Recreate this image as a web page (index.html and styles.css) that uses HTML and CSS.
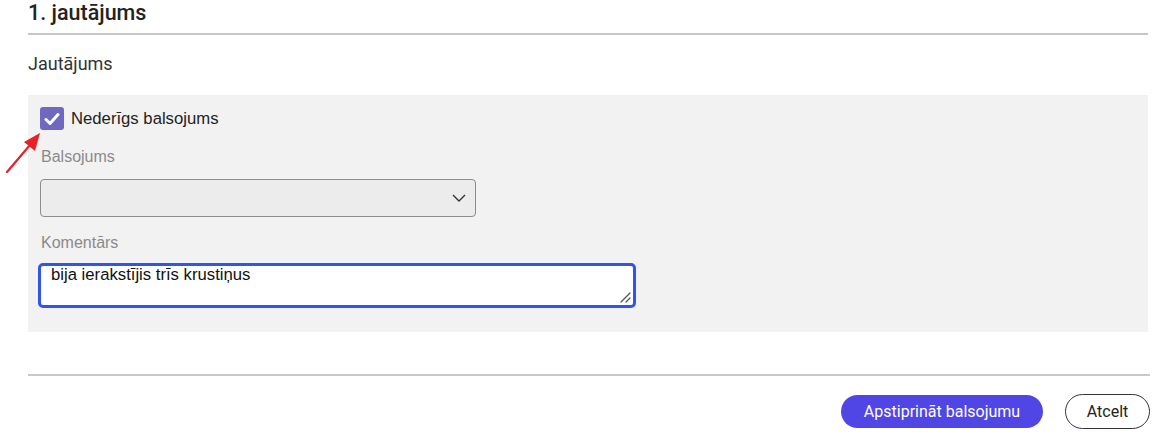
FILE: index.html
```html
<!DOCTYPE html>
<html lang="lv">
<head>
<meta charset="utf-8">
<link rel="stylesheet" href="styles.css">
</head>
<body>
<div class="page">
  <h1 class="title">1. jautājums</h1>
  <div class="question">Jautājums</div>
  <div class="panel">
    <label class="check-row">
      <span class="checkbox">
        <svg width="16" height="14" viewBox="0 0 16 14"><path d="M2 7.5 L6 11.5 L14 2.5" fill="none" stroke="#fff" stroke-width="3" stroke-linecap="round" stroke-linejoin="round"/></svg>
      </span>
      <span class="check-label">Nederīgs balsojums</span>
    </label>
    <div class="field-label">Balsojums</div>
    <div class="select">
      <svg class="chev" width="14" height="8" viewBox="0 0 14 8"><path d="M1 1 L7 7 L13 1" fill="none" stroke="#333" stroke-width="1.4"/></svg>
    </div>
    <div class="field-label komentars">Komentārs</div>
    <div class="comment-wrap">
      <textarea class="comment">bija ierakstījis trīs krustiņus</textarea>
      <svg class="grip" width="12" height="12" viewBox="0 0 12 12"><path d="M11 2 L2 11 M11 7 L7 11" stroke="#555" stroke-width="1.3" stroke-linecap="round"/></svg>
    </div>
    <svg class="arrow" width="44" height="48" viewBox="0 0 44 48"><path d="M3 44 L26 17" stroke="#e8202a" stroke-width="2.2" stroke-linecap="round"/><path d="M36 5 L20 14 L31 23 Z" fill="#e8202a"/></svg>
  </div>
  <div class="actions">
    <button class="btn primary">Apstiprināt balsojumu</button>
    <button class="btn outline">Atcelt</button>
  </div>
</div>
</body>
</html>
```
FILE: styles.css
```css
html, body { margin: 0; padding: 0; background: #fff; }
body { font-family: Roboto, "Liberation Sans", sans-serif; color: #222; }
.page { width: 1120px; margin-left: 28px; }
.title {
  margin: 0;
  font-size: 21.5px;
  font-weight: 500;
  line-height: 25px;
  padding-bottom: 8px;
  color: #222;
  border-bottom: 2px solid #c8c8c8;
}
.question {
  font-size: 18px;
  line-height: 22px;
  margin-top: 18px;
  color: #333;
}
.panel {
  position: relative;
  margin-top: 20px;
  background: #f2f2f2;
  height: 237px;
  padding: 12px 12px 0 12px;
  box-sizing: border-box;
}
.check-row { display: flex; align-items: center; gap: 7px; height: 23px; }
.checkbox {
  width: 24px; height: 23px; border-radius: 3px;
  background: #7068c0;
  display: flex; align-items: center; justify-content: center;
}
.check-label { font-family: "Liberation Sans", Arial, sans-serif; font-size: 16.7px; color: #222; }
.field-label {
  font-family: "Liberation Sans", Arial, sans-serif;
  font-size: 16px; line-height: 20px; color: #8a8a8a;
  margin-top: 17px; margin-left: 1px;
}
.select {
  margin-top: 12px;
  width: 436px; height: 38px; box-sizing: border-box;
  border: 1px solid #8c8c8c; border-radius: 4px;
  background: #ececec;
  display: flex; align-items: center; justify-content: flex-end;
  padding-right: 9px;
}
.komentars { margin-top: 16px; }
.comment-wrap {
  position: relative;
  margin-top: 10px; margin-left: -2px;
  width: 598px; height: 45px;
}
.comment {
  display: block;
  width: 598px; height: 45px; box-sizing: border-box;
  border: 3px solid #2f55f0; border-radius: 5px;
  background: #fff;
  font-family: "Liberation Sans", Arial, sans-serif;
  font-size: 16.7px; line-height: 18px; color: #111;
  padding: 0 10px;
  outline: none;
  resize: none;
}
.grip { position: absolute; right: 5px; bottom: 5px; }
.arrow { position: absolute; left: -24px; top: 33px; }
.actions {
  border-top: 2px solid #c8c8c8;
  margin-top: 42px;
  padding-top: 18px;
  display: flex; justify-content: flex-end; gap: 22px;
  margin-right: -2px;
}
.btn {
  font-family: Roboto, "Liberation Sans", sans-serif;
  font-size: 16px; cursor: pointer;
  border-radius: 18px;
}
.primary {
  background: #5046e5; color: #fff; border: none;
  width: 202px; height: 33px; margin-top: 1px;
}
.outline {
  background: #fff; color: #222; border: 1px solid #333;
  width: 85px; height: 35px;
}
```
